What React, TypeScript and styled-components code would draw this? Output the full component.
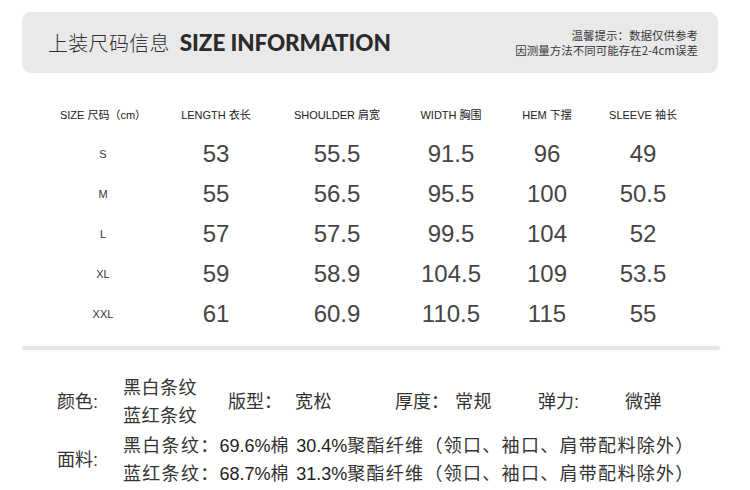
import React from "react";
import styled, { createGlobalStyle } from "styled-components";

const GlobalStyle = createGlobalStyle`
  body {
    margin: 0;
    background: #ffffff;
    font-family: "Liberation Sans", "Noto Sans CJK SC", sans-serif;
    color: #333;
  }
`;

const Page = styled.main`
  width: 750px;
  height: 490px;
  overflow: hidden;
  padding-top: 12px;
  box-sizing: border-box;
`;

/* =========================
   HEADER
========================= */

const HeaderBox = styled.header`
  margin: 0 32px 0 22px;
  height: 61px;
  background-color: #e9e9e9;
  border-radius: 9px;
  display: flex;
  align-items: center;
  justify-content: space-between;
  padding: 0 20px 0 26px;
`;

const TitleGroup = styled.div`
  display: flex;
  align-items: center;
  gap: 10px;
`;

const TitleCn = styled.h1`
  margin: 0;
  font-family: "Noto Sans CJK SC", sans-serif;
  font-size: 20px;
  font-weight: 300;
  color: #2e2e2e;
  letter-spacing: 0.3px;
`;

const TitleEn = styled.span`
  font-family: "Lato", "Liberation Sans", sans-serif;
  font-size: 22.5px;
  font-weight: 900;
  color: #2b2b2b;
  letter-spacing: -0.1px;
`;

const Notice = styled.div`
  text-align: right;
  font-family: "Noto Sans CJK SC", sans-serif;
  font-size: 11.5px;
  line-height: 15px;
  color: #3a3a3a;
`;

/* =========================
   SIZE TABLE
========================= */

const Table = styled.div`
  display: grid;
  grid-template-columns: 114px 112px 130px 98px 94px 98px;
  grid-auto-rows: 40px;
  margin: 21px 0 0 46px;
`;

const HeadCell = styled.div`
  display: flex;
  align-items: center;
  justify-content: center;
  font-size: 11px;
  color: #222;
  white-space: nowrap;
`;

const SizeCell = styled.div`
  display: flex;
  align-items: center;
  justify-content: center;
  font-size: 11px;
  color: #333;
`;

const ValueCell = styled.div`
  display: flex;
  align-items: center;
  justify-content: center;
  font-size: 24px;
  color: #454545;
`;

const Divider = styled.div`
  margin: 12px 30px 0 22px;
  height: 4px;
  border-radius: 2px;
  background-color: #e6e6e6;
  box-shadow: 0 0 3px #efefef;
`;

/* =========================
   DETAILS
========================= */

const Details = styled.div`
  display: grid;
  grid-template-columns: 66px 105px 67px 100px 60px 83px 87px auto;
  align-items: center;
  row-gap: 3px;
  margin: 25px 0 0 57px;
  font-family: "Liberation Sans", "Noto Sans CJK SC", sans-serif;
  font-size: 18px;
  line-height: 27.5px;
  color: #333;
`;

const Label = styled.div`
  white-space: nowrap;
`;

const Value = styled.div<{ $wide?: boolean }>`
  white-space: nowrap;
  letter-spacing: ${(p) => (p.$wide ? "1.3px" : "0.5px")};
  grid-column: ${(p) => (p.$wide ? "2 / -1" : "auto")};
`;

const Num = styled.span`
  color: #1f1f1f;
  letter-spacing: 0;
`;

const headers = [
  "SIZE 尺码（cm）",
  "LENGTH 衣长",
  "SHOULDER 肩宽",
  "WIDTH 胸围",
  "HEM 下摆",
  "SLEEVE 袖长",
];

const rows: [string, string[]][] = [
  ["S", ["53", "55.5", "91.5", "96", "49"]],
  ["M", ["55", "56.5", "95.5", "100", "50.5"]],
  ["L", ["57", "57.5", "99.5", "104", "52"]],
  ["XL", ["59", "58.9", "104.5", "109", "53.5"]],
  ["XXL", ["61", "60.9", "110.5", "115", "55"]],
];

const App: React.FC = () => {
  return (
    <Page>
      <GlobalStyle />

      <HeaderBox>
        <TitleGroup>
          <TitleCn>上装尺码信息</TitleCn>
          <TitleEn>SIZE INFORMATION</TitleEn>
        </TitleGroup>
        <Notice>
          温馨提示：数据仅供参考
          <br />
          因测量方法不同可能存在2-4cm误差
        </Notice>
      </HeaderBox>

      <Table>
        {headers.map((h) => (
          <HeadCell key={h}>{h}</HeadCell>
        ))}
        {rows.map(([size, values]) => (
          <React.Fragment key={size}>
            <SizeCell>{size}</SizeCell>
            {values.map((v, i) => (
              <ValueCell key={i}>{v}</ValueCell>
            ))}
          </React.Fragment>
        ))}
      </Table>

      <Divider />

      <Details>
        <Label>颜色:</Label>
        <Value>
          黑白条纹
          <br />
          蓝红条纹
        </Value>
        <Label>版型：</Label>
        <Value>宽松</Value>
        <Label>厚度：</Label>
        <Value>常规</Value>
        <Label>弹力:</Label>
        <Value>微弹</Value>

        <Label>面料:</Label>
        <Value $wide>
          黑白条纹：<Num>69.6%</Num>棉 <Num>30.4%</Num>聚酯纤维（领口、袖口、肩带配料除外）
          <br />
          蓝红条纹：<Num>68.7%</Num>棉 <Num>31.3%</Num>聚酯纤维（领口、袖口、肩带配料除外）
        </Value>
      </Details>
    </Page>
  );
};

export default App;
